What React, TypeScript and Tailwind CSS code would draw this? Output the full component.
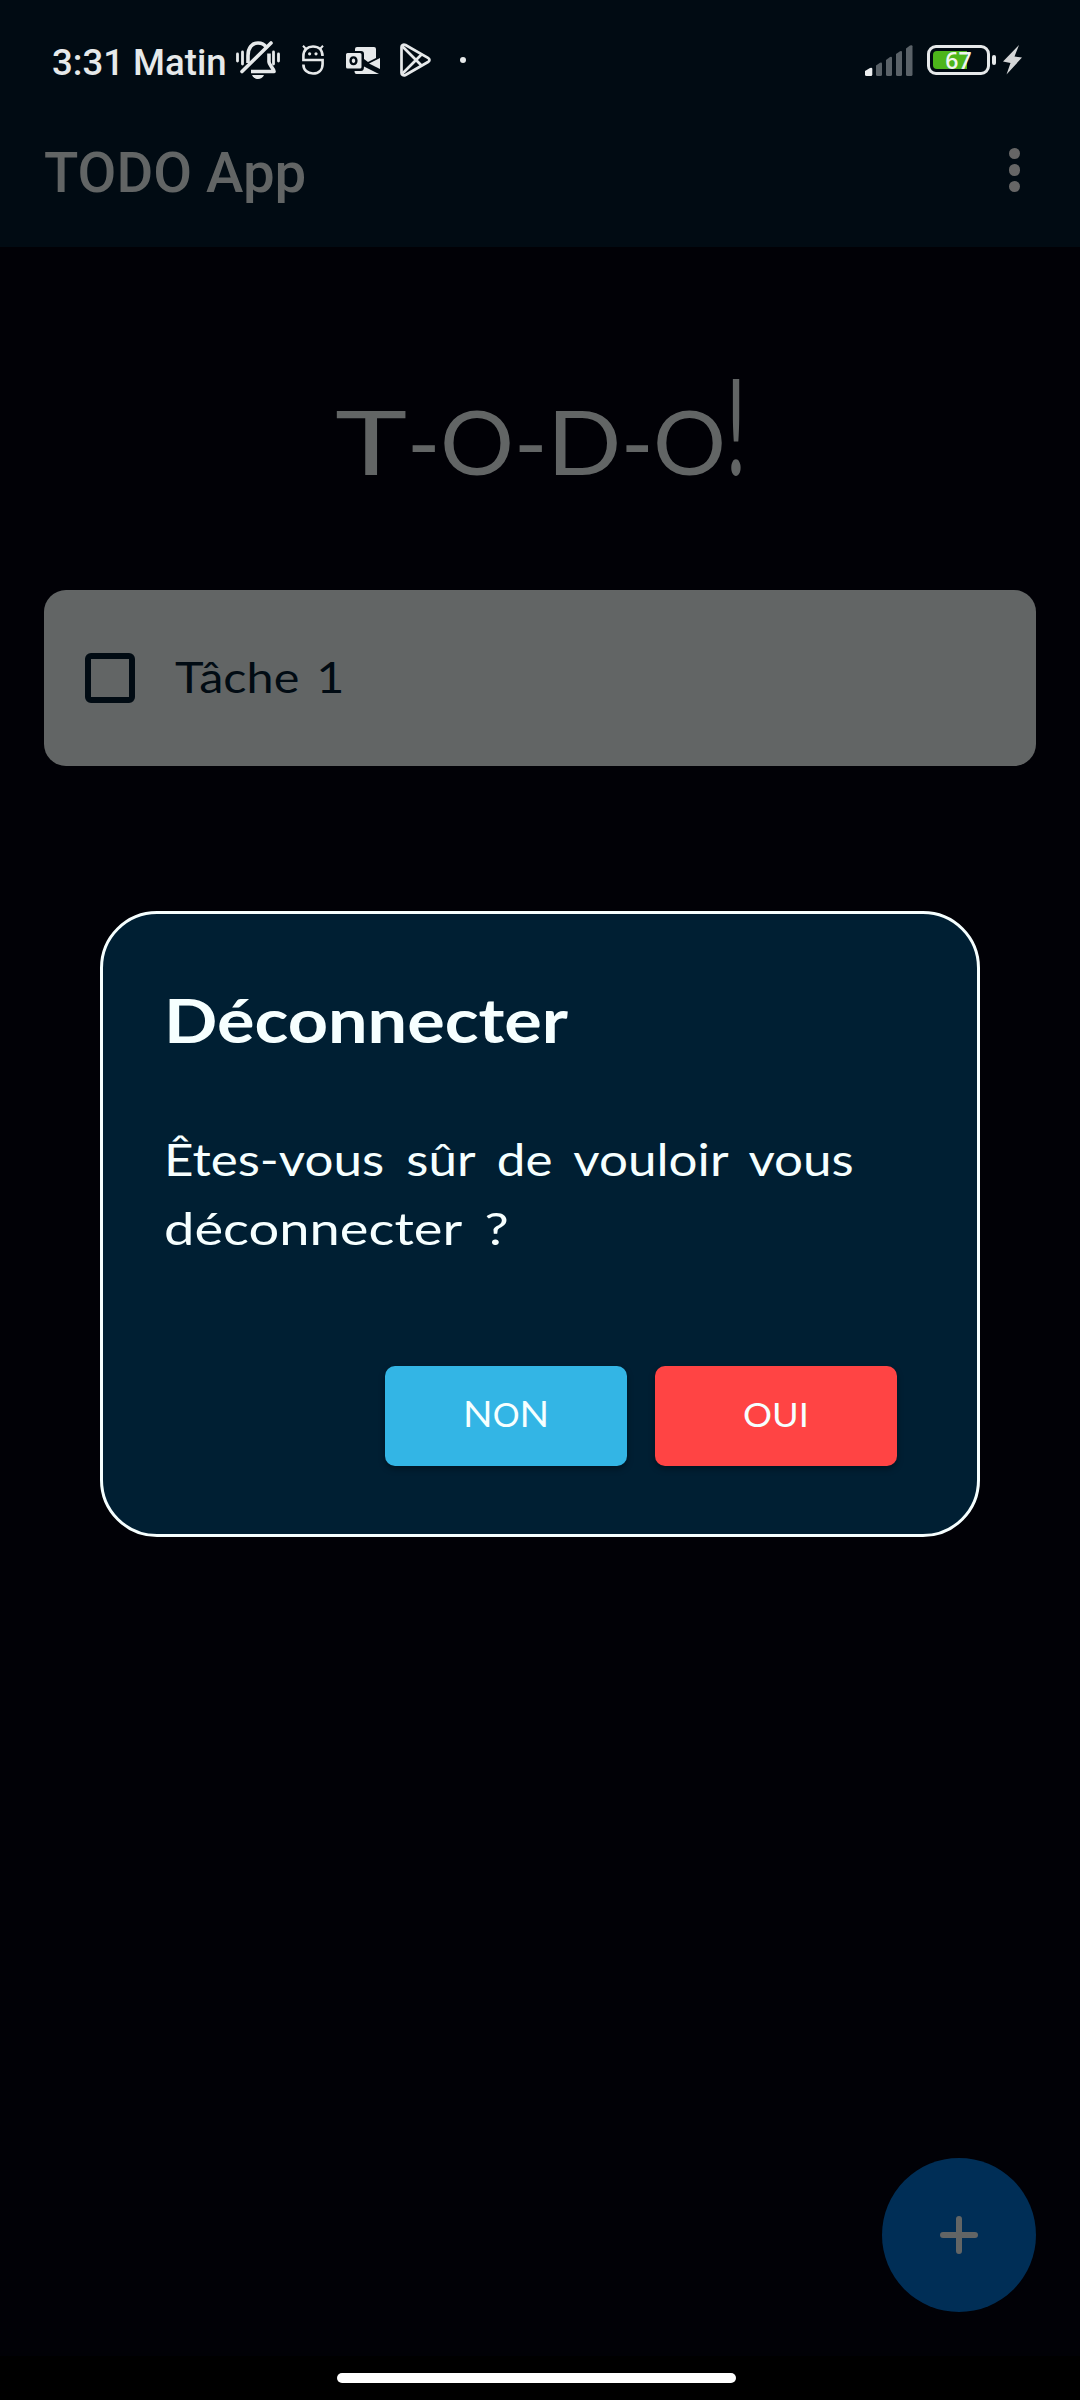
import { useLayoutEffect, useRef, useState, type ReactNode } from "react";

/* Stretches one line of text horizontally so that it fills its box. */
function FitText({ className, children }: { className: string; children: ReactNode }) {
  const box = useRef<HTMLSpanElement>(null);
  const line = useRef<HTMLSpanElement>(null);
  const [scale, setScale] = useState(1);
  useLayoutEffect(() => {
    if (box.current && line.current) setScale(box.current.clientWidth / line.current.offsetWidth);
  }, []);
  return (
    <span ref={box} className={`block whitespace-nowrap ${className}`}>
      <span ref={line} className="inline-block origin-left" style={{ transform: `scaleX(${scale})` }}>
        {children}
      </span>
    </span>
  );
}

function BellOff() {
  return (
    <svg width="44" height="38" viewBox="0 0 44 38" fill="none" stroke="#e6e9ea" strokeWidth="3.6" className="block">
      <path d="M12 22V14.500C12 7 16 2 22 2c3.500 0 6.500 1.500 8 4" />
      <path d="M33 12.500v8.500c0 3 4.500 6 5 9.500H15" strokeLinejoin="round" />
      <path d="M6 30.500 35 2" strokeLinecap="round" />
      <path d="M1.500 13v7M6.500 11v12M37.500 11v12M42.500 13v7" strokeWidth="2.800" strokeLinecap="round" />
      <path d="M16 34h12c-1 2.500-3.500 4-6 4s-5-1.500-6-4Z" fill="#e6e9ea" stroke="none" />
    </svg>
  );
}

function DroidS() {
  return (
    <svg width="22" height="30" viewBox="0 0 22 30" fill="none" stroke="#e6e9ea" strokeWidth="2.600" className="block">
      <path d="M20.500 11C20.500 5 16.500 1.500 11 1.500S1.400 5 1.400 11v4h19.200V19c0 6-4 9.500-9.600 9.500S1.400 25 1.400 19.500" />
      <path d="M1 .8 4 4M21 .8 18 4" strokeWidth="2" />
      <circle cx="7.600" cy="8.800" r="1.600" fill="#e6e9ea" stroke="none" />
      <circle cx="14" cy="8.800" r="1.600" fill="#e6e9ea" stroke="none" />
    </svg>
  );
}

function Outlook() {
  return (
    <svg width="34" height="27" viewBox="0 0 34 27" fill="#e6e9ea" className="block">
      <path d="M9 4V2q0-2 2-2h17q2 0 2 2v9l-8 4-4-3V7q0-3-3-3Z" />
      <path fillRule="evenodd" d="M1.500 6H14q1.500 0 1.500 1.500V20q0 1.500-1.500 1.500H1.500Q0 21.500 0 20V7.500Q0 6 1.500 6Zm6 3.200c-2.600 0-4.100 2-4.100 4.600s1.500 4.500 4.100 4.500 4.100-1.900 4.100-4.500-1.500-4.600-4.100-4.600Zm0 2.300c1.100 0 1.700 1 1.700 2.300s-.6 2.200-1.700 2.200-1.700-.9-1.700-2.200.6-2.300 1.700-2.300Z" />
      <path d="M34 11v11l-11-5.500ZM8.500 24H15q3 0 3-4.500L33 27H10.500Q8.500 27 8.500 24Z" />
    </svg>
  );
}

function PlayStore() {
  return (
    <svg width="31" height="34" viewBox="0 0 31 34" fill="none" stroke="#e6e9ea" strokeWidth="2.700" strokeLinejoin="round" className="block">
      <path d="M1.500 4v26c0 2 2 3 4 2l22.500-13c2-1.200 2-3 0-4.200L5.500 2C3.500 1 1.500 2 1.500 4Z" />
      <path d="M2.500 3.500 21.500 22.500M2.500 30.500 21.500 11.500" />
    </svg>
  );
}

function Signal() {
  return (
    <svg width="48" height="31" viewBox="0 0 48 31" fill="#5a6268" className="block">
      <path d="M0 26l5-3q2.300-1 2.300 1v5.500q0 1.500-1.500 1.500H1.500Q0 31 0 29.500Z" fill="#eceeef" />
      <path d="M11 20.500l4-2.800q2-.8 2 .8V29.500q0 1.500-1.500 1.500h-3Q11 31 11 29.500Z" />
      <path d="M21 15l4-3q2-.8 2 .8V29.500q0 1.500-1.500 1.500h-3Q21 31 21 29.500Z" />
      <path d="M31 9l4-2.800q2-.8 2 .8V29.500q0 1.500-1.500 1.500h-3Q31 31 31 29.500Z" />
      <path d="M41 3.500l4-3q2.500-.8 2.500.8V29.500Q47.500 31 46 31h-3.500Q41 31 41 29.500Z" />
    </svg>
  );
}

export default function App() {
  return (
    <div className="relative flex h-[2400px] w-[1080px] flex-col overflow-hidden bg-[#010106] font-['Lato',sans-serif]">
      <header className="h-[247px] bg-[#010b13]">
        <div className="flex h-[120px] items-center pl-[52px] pr-[58px] font-['Roboto',sans-serif]">
          <FitText className="w-[175px] pt-[5px] text-[37px] font-medium leading-[44px] text-[#e6e9ea]">3:31 Matin</FitText>
          <span className="ml-[9px]"><BellOff /></span>
          <span className="ml-[22px]"><DroidS /></span>
          <span className="ml-[22px]"><Outlook /></span>
          <span className="ml-[20px]"><PlayStore /></span>
          <span className="ml-[29px] size-[6px] rounded-full bg-[#e6e9ea]" />
          <span className="ml-auto"><Signal /></span>
          <div className="relative ml-[14px] h-[30px] w-[63px] rounded-[9px] border-[3px] border-[#e6e9ea] p-[3px]">
            <div className="h-[18px] w-[34px] rounded-l-[4px] bg-[#4db51b]" />
            <span className="absolute inset-0 text-center font-['Open_Sans',sans-serif] text-[23px] font-semibold leading-[25px] text-[#f0f5ee]">67</span>
          </div>
          <span className="ml-[2px] h-[10px] w-[4px] rounded-[2px] bg-[#e6e9ea]" />
          <svg width="19" height="30" viewBox="0 0 19 30" className="ml-[7px] block" fill="#d4d6d7">
            <path d="M16 0 0 16.500l7.500 1.500L3.500 29.500 19 12.500l-7.500-1Z" />
          </svg>
        </div>
        <div className="flex h-[106px] items-center justify-between pl-[44px] pr-[60px]">
          <FitText className="w-[262px] pt-[2px] font-['Roboto',sans-serif] text-[55.5px] font-medium leading-[66px] text-[#626565]">TODO App</FitText>
          <div className="flex flex-col gap-[5px] pb-[6px]">
            <span className="size-[11.5px] rounded-full bg-[#666]" />
            <span className="size-[11.5px] rounded-full bg-[#666]" />
            <span className="size-[11.5px] rounded-full bg-[#666]" />
          </div>
        </div>
      </header>

      <main className="flex h-[2109px] flex-col px-[44px]">
        <h1 className="flex h-[343px] items-baseline pl-[291px] pt-[97px] text-[90px] leading-[160px] text-[#626565]">
          <FitText className="w-[72px]">T</FitText>
          <FitText className="w-[33px]">-</FitText>
          <FitText className="w-[74px]">O</FitText>
          <FitText className="w-[33px]">-</FitText>
          <FitText className="w-[74px]">D</FitText>
          <FitText className="w-[32px]">-</FitText>
          <FitText className="w-[73px]">O</FitText>
          <FitText className="w-[20px] text-[134px]">!</FitText>
        </h1>
        <div className="flex h-[176px] shrink-0 items-center rounded-[22px] bg-[#626565] pl-[41px]">
          <span className="size-[50px] rounded-[6px] border-[6px] border-[#010b13]" />
          <FitText className="ml-[40px] w-[170px] pb-[3px] text-[42px] leading-[50px] text-[#010b13]">Tâche <span className="ml-1">1</span></FitText>
        </div>
        <button className="mb-[44px] ml-auto mt-auto flex size-[154px] items-center justify-center rounded-full bg-[#002e56]">
          <svg width="38" height="38" viewBox="0 0 38 38" stroke="#626565" strokeWidth="6" strokeLinecap="round">
            <path d="M19 3v32M3 19h32" />
          </svg>
        </button>
      </main>
      <footer className="h-[44px] bg-black pl-[337px] pt-[17px]">
        <div className="h-[10px] w-[399px] rounded-full bg-white" />
      </footer>

      <div className="absolute left-[100px] top-[911px] flex h-[626px] w-[880px] flex-col rounded-[57px] border-[3px] border-[#f6ffff] bg-[#001f33] pl-[61px] pr-[80px] text-[#f6ffff]">
        <h2 className="mt-[68px]">
          <FitText className="w-[404px] text-[61px] font-bold leading-[76px]">Déconnecter</FitText>
        </h2>
        <p className="mt-[67px]">
          <FitText className="w-[690px] text-[45px] leading-[69px] [word-spacing:8px]">Êtes-vous sûr de vouloir vous</FitText>
          <FitText className="w-[345px] text-[45px] leading-[69px] [word-spacing:8px]">déconnecter ?</FitText>
        </p>
        <div className="mb-[68px] mt-auto flex justify-end gap-[28px]">
          <button className="flex h-[100px] w-[242px] items-center justify-center rounded-[10px] bg-[#33b5e5] pb-1 shadow-[0_3px_6px_rgba(0,0,0,0.35)]">
            <FitText className="w-[86px] text-left text-[37px] leading-[44px]">N<span className="text-[32px]">O</span>N</FitText>
          </button>
          <button className="flex h-[100px] w-[242px] items-center justify-center rounded-[10px] bg-[#ff4444] pb-1 shadow-[0_3px_6px_rgba(0,0,0,0.35)]">
            <FitText className="w-[66px] text-left text-[33px] leading-[44px]">OUI</FitText>
          </button>
        </div>
      </div>
    </div>
  );
}
